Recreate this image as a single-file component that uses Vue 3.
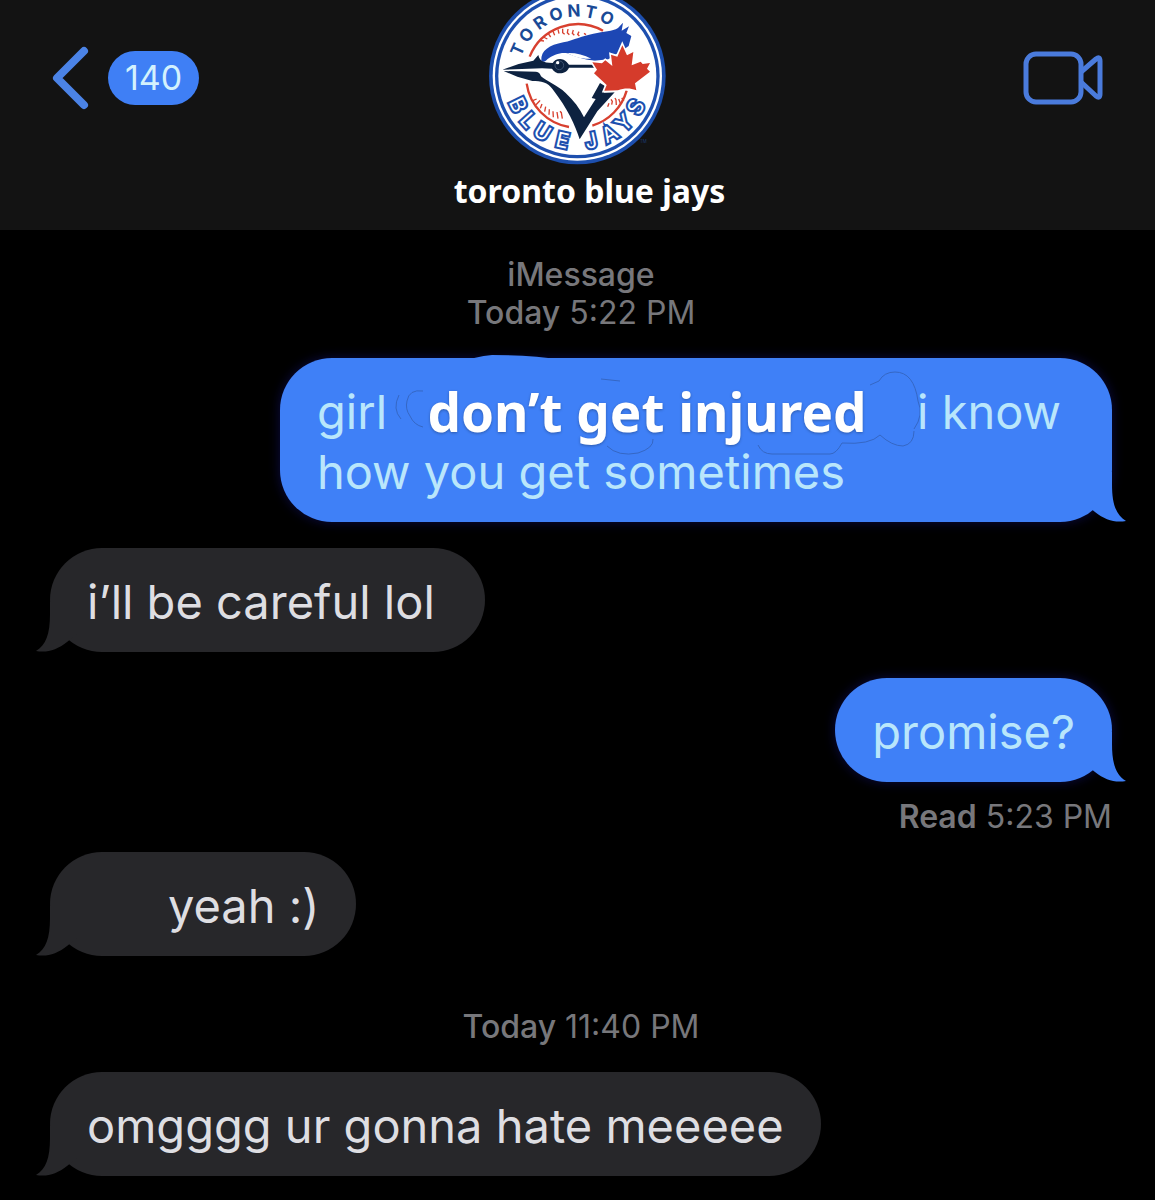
<script setup>
import { ref } from 'vue';

const unread = ref(140);

const thread = [
  { id: 1, type: 'time', service: 'iMessage', day: 'Today', time: '5:22 PM' },
  {
    id: 2,
    type: 'message',
    from: 'me',
    wide: true,
    lines: [
      [{ text: 'girl' }, { text: 'don’t get injured', strong: true }, { text: 'i know' }],
      [{ text: 'how you get sometimes' }]
    ]
  },
  { id: 3, type: 'message', from: 'them', roomy: true, lines: [[{ text: 'i’ll be careful lol' }]] },
  { id: 4, type: 'message', from: 'me', lines: [[{ text: 'promise?' }]] },
  { id: 5, type: 'receipt', label: 'Read', time: '5:23 PM' },
  { id: 6, type: 'message', from: 'them', indent: true, lines: [[{ text: 'yeah :)' }]] },
  { id: 7, type: 'time', day: 'Today', time: '11:40 PM' },
  { id: 8, type: 'message', from: 'them', lines: [[{ text: 'omgggg ur gonna hate meeeee' }]] }
];

// letters of the badge, each turned around the centre of the circle
const topLetters = [
  { char: 'T', angle: -66 },
  { char: 'O', angle: -51 },
  { char: 'R', angle: -35 },
  { char: 'O', angle: -19 },
  { char: 'N', angle: -3 },
  { char: 'T', angle: 12 },
  { char: 'O', angle: 27 }
];

const bottomLetters = [
  { char: 'B', angle: 64 },
  { char: 'L', angle: 48 },
  { char: 'U', angle: 32 },
  { char: 'E', angle: 13 },
  { char: 'J', angle: -12 },
  { char: 'A', angle: -29 },
  { char: 'Y', angle: -45 },
  { char: 'S', angle: -62 }
];
</script>

<template>
  <div class="chat">
    <header class="header">
      <button class="back" type="button" aria-label="Back">
        <svg class="chevron" width="38" height="64" viewBox="0 0 38 64">
          <path d="M32 5 L5 32 L32 59" />
        </svg>
        <span class="badge">{{ unread }}</span>
      </button>

      <div class="contact">
        <svg class="avatar" width="177" height="165" viewBox="27 0 531 495">
          <circle cx="292" cy="228" r="265" fill="#1d4fae" />
          <circle cx="292" cy="228" r="254" fill="#fff" />
          <circle cx="292" cy="228" r="247" fill="#1d4fae" />
          <circle cx="292" cy="228" r="237" fill="#fff" />

          <g class="seams">
            <path d="M149 170 A156 156 0 0 1 369 92" />
            <path d="M140 251 A154 154 0 0 0 267 381" />
            <path d="M337 377 A154 154 0 0 0 440 272" />
          </g>
          <g class="stitches">
            <path d="M178 121 l14 2 M190 111 l12 6 M205 101 l7 10 M219 94 l5 12 M234 88 l3 13 M248 86 l0 12 l6 5 M264 87 l-2 11 l6 6 M280 90 l-3 10 l6 6 M297 95 l-4 8 l5 5 M312 100 l6 4" />
            <path d="M158 302 l12 -5 M168 314 l10 -10 l2 -3 M181 325 l5 -13 M194 335 l3 -15 M207 344 l1 -16 M220 352 l-1 -18 M234 356 l-3 -20 M247 356 l-3 -18 l-4 -4" />
            <path d="M383 320 l4 -10 M395 314 l2 -10 l-4 -6 M409 315 l-1 -15 l-3 -6 M422 312 l-6 -15 M432 302 l-7 -8" />
          </g>

          <path
            fill="#1d47b4"
            d="M184 182 C182 152 208 135 250 127 C285 119 305 108 340 101 C372 94 397 95 414 84 L429 68 L425 92 L447 79 L439 99 L454 108 L446 138 L434 146 L385 178 L342 182 C310 178 285 171 262 160 C245 156 218 164 202 178 C196 186 188 187 184 182 Z"
          />
          <path fill="#fff" d="M262 159 C285 158 312 164 334 176 C308 178 282 171 262 159 Z" />
          <path
            fill="#0d2240"
            d="M67 209 L116 192 L160 182 L175 165 C179 182 187 188 218 189 C224 176 248 171 260 186 L267 194 L345 194 L345 203 L267 203 C258 223 228 227 216 206 L186 205 L67 209 Z"
          />
          <circle cx="238" cy="196" r="13" fill="none" stroke="#526783" stroke-width="2" />
          <circle cx="233" cy="188" r="5" fill="#fff" />
          <path
            fill="#0d2240"
            d="M71 213 L168 215 C177 216 181 222 183 229 C199 244 232 255 257 279 C281 301 299 325 312 352 L347 297 L335 294 L360 249 L376 259 L371 278 L404 277 L352 334 L299 418 C286 377 263 326 218 268 C204 247 183 243 157 243 L112 230 Z"
          />
          <path
            class="leaf"
            d="M427 136 L441 166 L460 156 L455 196 L482 185 L488 192 L510 189 L501 206 L510 215 L465 250 L469 271 C449 263 431 265 414 271 L373 272 L380 255 L342 220 L351 209 L337 187 L366 190 L376 181 L397 198 L393 164 L412 170 Z"
          />

          <text
            v-for="(letter, i) in topLetters"
            :key="'top' + i"
            class="letter"
            x="292"
            y="50"
            :transform="`rotate(${letter.angle} 292 228)`"
          >{{ letter.char }}</text>
          <text
            v-for="(letter, i) in bottomLetters"
            :key="'bottom' + i"
            class="letter inline"
            x="292"
            y="448"
            :transform="`rotate(${letter.angle} 292 228)`"
          >{{ letter.char }}</text>
          <text class="mark" x="480" y="430">TM</text>
        </svg>
        <h1 class="name">toronto blue jays</h1>
      </div>

      <button class="video" type="button" aria-label="Video call">
        <svg width="80" height="54" viewBox="0 0 80 54">
          <rect x="3" y="3" width="55" height="48" rx="10" />
          <path d="M58 21 L73 8 Q77 5 77 10 V43 Q77 48 73 45 L58 31" />
        </svg>
      </button>
    </header>

    <main class="thread">
      <template v-for="item in thread" :key="item.id">
        <p v-if="item.type === 'time'" class="meta time" :class="{ later: !item.service }">
          <span v-if="item.service" class="label">{{ item.service }}</span>
          <span><span class="label">{{ item.day }}</span> {{ item.time }}</span>
        </p>

        <p v-else-if="item.type === 'receipt'" class="meta receipt">
          <b>{{ item.label }}</b> {{ item.time }}
        </p>

        <div
          v-else
          class="bubble"
          :class="[item.from, { wide: item.wide, roomy: item.roomy, indent: item.indent }]"
        >
          <svg class="tail" width="46" height="50" viewBox="0 0 46 50">
            <path d="M0 0 H32 V12 C32 32 36 43 46 49 C35 51 25 48 15 40 L0 28 Z" />
          </svg>
          <!-- brush marks left around the pasted words -->
          <svg v-if="item.wide" class="smudges" width="640" height="110" viewBox="0 0 640 110">
            <path class="patch" d="M186 8 Q194 1 212 0 Q250 0 284 5 L284 14 L186 14 Z" />
            <path d="M143 36 Q129 34 127 46 Q125 54 130 61 Q134 70 143 72 M119 40 Q112 54 121 64 M321 24 L340 26 M327 91 Q338 102 358 98 Q374 93 373 84" />
            <path d="M478 90 Q482 99 492 99 H550 Q556 99 562 88 Q590 90 600 80 Q612 91 623 91 Q634 89 634 76 M634 74 Q644 60 638 46 Q634 17 615 17 Q604 17 599 26 L590 30" />
          </svg>
          <p v-for="(line, i) in item.lines" :key="i" class="line">
            <template v-for="part in line" :key="part.text">
              <strong v-if="part.strong" class="pasted">{{ part.text }}</strong>
              <span v-else>{{ part.text }}</span>
            </template>
          </p>
        </div>
      </template>
    </main>
  </div>
</template>

<style>
body {
  margin: 0;
  background: #000;
}
</style>

<style scoped>
.chat {
  min-height: 100vh;
  background: #000;
  color: #dedee2;
  font-family: Inter, "Liberation Sans", sans-serif;
}

.header {
  display: grid;
  grid-template-columns: 1fr auto 1fr;
  align-items: start;
  padding: 0 52px 15px;
  background: #131313;
}

button {
  padding: 0;
  border: 0;
  background: none;
  font: inherit;
  cursor: pointer;
}

.back {
  display: flex;
  align-items: center;
  justify-self: start;
  gap: 18px;
  margin-top: 46px;
}

.chevron path {
  fill: none;
  stroke: #4b83e6;
  stroke-width: 8;
  stroke-linecap: round;
  stroke-linejoin: round;
}

.badge {
  padding: 0 17px;
  border-radius: 27px;
  background: #3f7ff5;
  color: #d3f1fd;
  font-size: 34px;
  line-height: 54px;
}

.contact {
  display: flex;
  flex-direction: column;
  align-items: center;
}

.avatar {
  display: block;
}

.seams path {
  fill: none;
  stroke: #d8402f;
  stroke-width: 7;
}

.stitches path {
  fill: none;
  stroke: #d8402f;
  stroke-width: 4;
}

.leaf {
  fill: #d53b2b;
  stroke: #fff;
  stroke-width: 10;
  paint-order: stroke;
}

.letter {
  fill: #1a4a96;
  font-family: Inter, "Liberation Sans", sans-serif;
  font-size: 51px;
  font-weight: 700;
  text-anchor: middle;
}

.letter.inline {
  fill: #fff;
  stroke: #1d4fae;
  stroke-width: 13;
  paint-order: stroke;
  font-size: 62px;
  font-weight: 400;
}

.mark {
  fill: #1c3b74;
  font-size: 13px;
}

.name {
  margin: 2px 0 0;
  padding-left: 24px;
  color: #fff;
  font-family: "Noto Sans", sans-serif;
  font-size: 32px;
  font-weight: 700;
  line-height: 48px;
}

.video {
  justify-self: end;
  margin-top: 51px;
}

.video svg {
  display: block;
  fill: none;
  stroke: #4a7bdc;
  stroke-width: 5;
  stroke-linejoin: round;
}

.thread {
  display: flex;
  flex-direction: column;
  padding: 26px 43px 24px 50px;
}

.meta {
  margin: 0;
  color: #77777b;
  font-size: 32px;
  line-height: 38px;
}

.label {
  font-weight: 500;
}

.time {
  display: flex;
  flex-direction: column;
  align-items: center;
}

.later {
  margin-top: 52px;
}

.receipt {
  align-self: flex-end;
  margin: 16px 0 -10px;
}

.receipt b {
  font-weight: 600;
}

.bubble {
  position: relative;
  box-sizing: border-box;
  margin-top: 26px;
  padding: 24px 37px 20px;
  border-radius: 52px;
  font-size: 47px;
  line-height: 60px;
}

.them {
  align-self: flex-start;
  background: #27272a;
}

.me {
  align-self: flex-end;
  background: #3f80f7;
  color: #b9e6fb;
  box-shadow: 0 0 12px rgba(25, 25, 150, 0.45);
}

.wide {
  width: calc(100% - 230px);
}

.roomy {
  padding-right: 50px;
}

.indent {
  padding-left: 118px;
}

.line {
  position: relative;
  display: flex;
  justify-content: space-between;
  margin: 0;
  white-space: nowrap;
}

.wide .line {
  padding-right: 14px;
}

.pasted {
  margin-right: 10px;
  color: #fff;
  font-family: "Noto Sans", sans-serif;
  font-size: 53px;
  font-weight: 700;
  text-shadow: 0 1px 3px rgba(0, 0, 0, 0.3);
}

.tail {
  position: absolute;
  right: -14px;
  bottom: 0;
  fill: #3f80f7;
}

.them .tail {
  right: auto;
  left: -14px;
  fill: #27272a;
  transform: scaleX(-1);
}

.smudges {
  position: absolute;
  top: -3px;
  left: 0;
  fill: none;
  stroke: #3567c4;
  stroke-width: 1;
}

.smudges .patch {
  fill: #3f80f7;
  stroke: none;
}
</style>
